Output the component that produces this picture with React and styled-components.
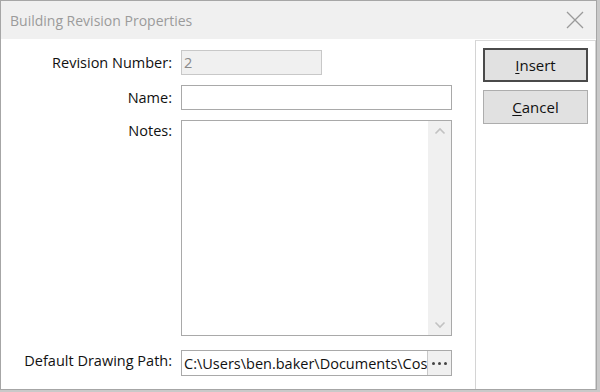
import styled, { createGlobalStyle } from 'styled-components';

const GlobalStyle = createGlobalStyle`
  html, body {
    margin: 0;
    padding: 0;
    background: #c9c9c9;
  }
  body {
    font-family: "Open Sans", "Noto Sans", "Liberation Sans", sans-serif;
  }
`;

const Window = styled.div`
  box-sizing: border-box;
  width: 597px;
  height: 390px;
  border: 1px solid #a6a6a6;
  background: #ffffff;
  display: flex;
  flex-direction: column;
`;

const TitleBar = styled.div`
  height: 38px;
  background: #f0f0f0;
  display: flex;
  align-items: center;
  justify-content: space-between;
  padding: 0 8px 0 9px;
`;

const Title = styled.div`
  font-size: 14px;
  color: #9b9b9b;
`;

const CloseIcon = styled.svg`
  width: 20px;
  height: 20px;
  margin-right: 3px;
`;

const Body = styled.div`
  flex: 1;
  display: flex;
`;

const Form = styled.div`
  flex: 1;
  display: grid;
  grid-template-columns: 171px 271px;
  grid-template-rows: 25px 25px 216px 26px;
  column-gap: 9px;
  row-gap: 10px;
  padding-top: 11px;
  align-content: start;
`;

const Label = styled.div`
  font-size: 14.5px;
  color: #111;
  text-align: right;
  align-self: ${p => (p.$top ? 'start' : 'center')};
  margin-top: ${p => (p.$top ? '1px' : '0')};
  margin-bottom: 1px;
`;

const Field = styled.div`
  box-sizing: border-box;
  width: ${p => p.$width || '271px'};
  height: 100%;
  border: 1px solid ${p => (p.$disabled ? '#c8c8c8' : '#a9a9a9')};
  background: ${p => (p.$disabled ? '#f0f0f0' : '#ffffff')};
  color: ${p => (p.$disabled ? '#8a8a8a' : '#111')};
  font-size: 14.5px;
  display: flex;
  align-items: center;
  padding-left: 2px;
  overflow: hidden;
  white-space: nowrap;
`;

const NotesBox = styled.div`
  box-sizing: border-box;
  width: 271px;
  height: 100%;
  border: 1px solid #a9a9a9;
  display: flex;
  justify-content: flex-end;
`;

const ScrollBar = styled.div`
  width: 23px;
  background: #f0f0f0;
  display: flex;
  flex-direction: column;
  justify-content: space-between;
  align-items: center;
  padding: 6px 0;
`;

const PathWrap = styled.div`
  grid-column: 2;
  margin-top: 4px;
  box-sizing: border-box;
  width: 271px;
  height: 26px;
  border: 1px solid #a9a9a9;
  display: flex;
`;

const PathText = styled.div`
  flex: 1;
  min-width: 0;
  overflow: hidden;
  white-space: nowrap;
  font-size: 14.5px;
  color: #111;
  display: flex;
  align-items: center;
  padding-left: 2px;
`;

const BrowseButton = styled.div`
  width: 23px;
  flex-shrink: 0;
  border-left: 1px solid #c8c8c8;
  background: #f0f0f0;
  display: flex;
  align-items: center;
  justify-content: center;
  gap: 3px;
`;

const Dot = styled.span`
  width: 3px;
  height: 3px;
  border-radius: 50%;
  background: #444;
`;

const PathLabel = styled(Label)`
  margin-top: 4px;
`;

const Side = styled.div`
  box-sizing: border-box;
  width: 121px;
  border-left: 1px solid #d4d4d4;
  border-top: 1px solid #d9d9d9;
  border-right: 1px solid #d4d4d4;
  margin-top: 1px;
  padding: 7px 0 0 7px;
  display: flex;
  flex-direction: column;
  gap: 8px;
`;

const Button = styled.div`
  box-sizing: border-box;
  width: 105px;
  height: 34px;
  background: #e1e1e1;
  border: ${p => (p.$default ? '2px solid #4a4a4a' : '1px solid #adadad')};
  display: flex;
  align-items: center;
  justify-content: center;
  font-size: 15px;
  color: #111;

  u {
    text-underline-offset: 2px;
  }
`;

const Chevron = ({ up }) => (
  <svg width="12" height="8" viewBox="0 0 12 8">
    <path
      d={up ? 'M1.5 6.5 L6 2 L10.5 6.5' : 'M1.5 1.5 L6 6 L10.5 1.5'}
      fill="none"
      stroke="#c2c2c2"
      strokeWidth="1.6"
    />
  </svg>
);

const App = () => {
  return (
    <>
      <GlobalStyle />
      <Window>
        <TitleBar>
          <Title>Building Revision Properties</Title>
          <CloseIcon viewBox="0 0 20 20">
            <path d="M2 2 L18 18 M18 2 L2 18" stroke="#9a9a9a" strokeWidth="1.3" fill="none" />
          </CloseIcon>
        </TitleBar>
        <Body>
          <Form>
            <Label>Revision Number:</Label>
            <Field $disabled $width="141px">2</Field>

            <Label>Name:</Label>
            <Field />

            <Label $top>Notes:</Label>
            <NotesBox>
              <ScrollBar>
                <Chevron up />
                <Chevron />
              </ScrollBar>
            </NotesBox>

            <PathLabel>Default Drawing Path:</PathLabel>
            <PathWrap>
              <PathText>C:\Users\ben.baker\Documents\Cos</PathText>
              <BrowseButton>
                <Dot />
                <Dot />
                <Dot />
              </BrowseButton>
            </PathWrap>
          </Form>
          <Side>
            <Button $default>
              <span><u>I</u>nsert</span>
            </Button>
            <Button>
              <span><u>C</u>ancel</span>
            </Button>
          </Side>
        </Body>
      </Window>
    </>
  );
};

export default App;
